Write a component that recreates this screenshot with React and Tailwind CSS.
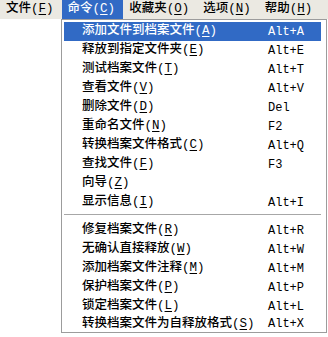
import React from 'react';

const menus = [
  { name: '文件', key: 'F' },
  { name: '命令', key: 'C', active: true },
  { name: '收藏夹', key: 'O' },
  { name: '选项', key: 'N' },
  { name: '帮助', key: 'H' }
];

const groupA = [
  { name: '添加文件到档案文件', key: 'A', shortcut: 'Alt+A', active: true },
  { name: '释放到指定文件夹', key: 'E', shortcut: 'Alt+E' },
  { name: '测试档案文件', key: 'T', shortcut: 'Alt+T' },
  { name: '查看文件', key: 'V', shortcut: 'Alt+V' },
  { name: '删除文件', key: 'D', shortcut: 'Del' },
  { name: '重命名文件', key: 'N', shortcut: 'F2' },
  { name: '转换档案文件格式', key: 'C', shortcut: 'Alt+Q' },
  { name: '查找文件', key: 'F', shortcut: 'F3' },
  { name: '向导', key: 'Z', shortcut: '' },
  { name: '显示信息', key: 'I', shortcut: 'Alt+I' }
];

const groupB = [
  { name: '修复档案文件', key: 'R', shortcut: 'Alt+R' },
  { name: '无确认直接释放', key: 'W', shortcut: 'Alt+W' },
  { name: '添加档案文件注释', key: 'M', shortcut: 'Alt+M' },
  { name: '保护档案文件', key: 'P', shortcut: 'Alt+P' },
  { name: '锁定档案文件', key: 'L', shortcut: 'Alt+L' },
  { name: '转换档案文件为自释放格式', key: 'S', shortcut: 'Alt+X' }
];

const Label = ({ name, mnemonic }) => (
  <span className="whitespace-nowrap">
    {name}(<span className="underline underline-offset-2">{mnemonic}</span>)
  </span>
);

const MenuRow = ({ item, last }) => (
  <div
    className={`flex items-center pl-[18px] ${last ? 'h-[16px]' : 'h-[19px]'} ${
      item.active ? 'bg-[#316ac5] text-white' : 'text-black'
    }`}
  >
    <div className="w-[186px]">
      <Label name={item.name} mnemonic={item.key} />
    </div>
    <span className="whitespace-nowrap text-[12px]">{item.shortcut}</span>
  </div>
);

export default function App() {
  return (
    <div className="relative w-[328px] h-[337px] bg-white overflow-hidden text-[12.5px] font-medium leading-none font-['Liberation_Mono','Noto_Sans_CJK_SC',monospace]">
      {/* Menu bar */}
      <div className="flex h-[19px] bg-[#ebe9e2]">
        {menus.map((m) => (
          <div
            key={m.key}
            className={`flex items-center pl-[6px] pr-[8px] ${
              m.active ? 'bg-[#316ac5] text-white' : 'text-black'
            }`}
          >
            <Label name={m.name} mnemonic={m.key} />
          </div>
        ))}
      </div>

      {/* Dropdown */}
      <div className="absolute left-[61px] top-[19px] w-[266px] border border-[#9c9c9c] bg-white pt-[2px] pl-[2px] pr-[5px]">
        {groupA.map((item) => (
          <MenuRow key={item.name} item={item} />
        ))}
        <div className="h-[9px] pt-[2px]">
          <div className="h-px bg-[#a7a7a7]" />
          <div className="h-px bg-white" />
        </div>
        {groupB.map((item, i) => (
          <MenuRow key={item.name} item={item} last={i === groupB.length - 1} />
        ))}
      </div>
    </div>
  );
}
